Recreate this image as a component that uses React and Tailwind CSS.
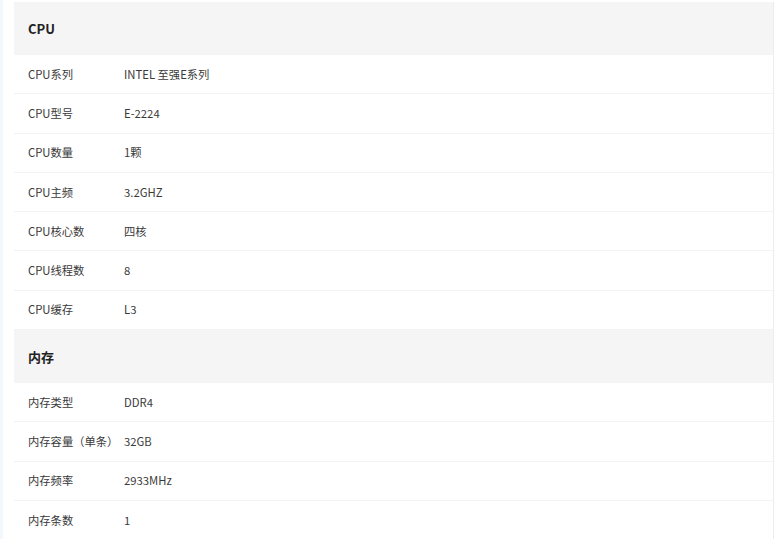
const sections = [
  {
    title: "CPU",
    rows: [
      ["CPU系列", "INTEL 至强E系列"],
      ["CPU型号", "E-2224"],
      ["CPU数量", "1颗"],
      ["CPU主频", "3.2GHZ"],
      ["CPU核心数", "四核"],
      ["CPU线程数", "8"],
      ["CPU缓存", "L3"],
    ],
  },
  {
    title: "内存",
    rows: [
      ["内存类型", "DDR4"],
      ["内存容量（单条）", "32GB"],
      ["内存频率", "2933MHz"],
      ["内存条数", "1"],
    ],
  },
];

function Section({ title, rows }) {
  return (
    <div>
      <div className="h-[53px] bg-[#f5f5f5] px-[14px] flex items-center text-[13px] font-bold text-[#222]">
        {title}
      </div>
      {rows.map(([label, value], i) => (
        <div
          key={i}
          className="h-[39.3px] flex items-center px-[14px] text-[11.3px] text-[#3a3a3a] border-b border-[#f3f3f3] bg-white"
        >
          <div className="w-[96px] shrink-0">{label}</div>
          <div>{value}</div>
        </div>
      ))}
    </div>
  );
}

export default function App() {
  return (
    <div
      className="w-full h-[539px] overflow-hidden bg-white flex"
      style={{ fontFamily: '"Noto Sans CJK SC", "Noto Sans", sans-serif' }}
    >
      <div className="w-[3px] shrink-0 bg-[#f3f8fe]" />
      <div className="flex-1 pl-[11px] pr-[10px] pt-[2px]">
        <div className="border-r border-[#ececec]">
          {sections.map((s) => (
            <Section key={s.title} title={s.title} rows={s.rows} />
          ))}
        </div>
      </div>
    </div>
  );
}
